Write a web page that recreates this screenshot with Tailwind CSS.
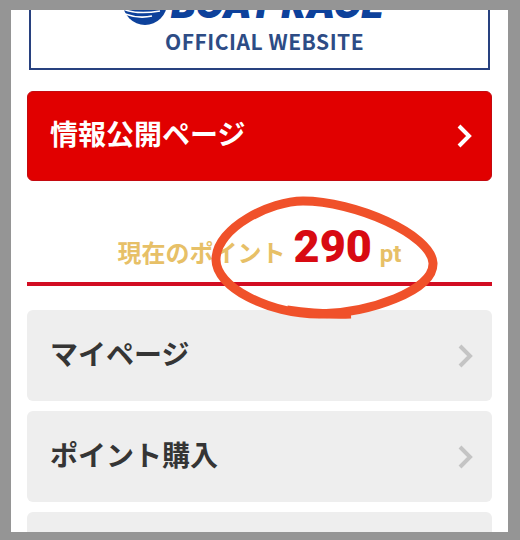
<!DOCTYPE html>
<html lang="ja">
  <head>
    <meta charset="UTF-8" />
    <meta name="viewport" content="width=device-width, initial-scale=1.0" />
    <title>BOAT RACE OFFICIAL WEBSITE</title>
    <!-- Tailwind CSS -->
    <script src="https://cdn.jsdelivr.net/npm/@tailwindcss/browser@4"></script>
  </head>
  <body class="bg-[#959595] font-['Roboto','Noto_Sans_CJK_JP',sans-serif]">
    <div class="h-screen pt-[10px] pb-2 pl-[11px] pr-3">
      <div class="h-full overflow-hidden bg-white px-4">
        <!-- Logo -->
        <header class="mx-[2px] flex h-[60px] flex-col items-center justify-end border-2 border-t-0 border-[#28417f] pb-[11px] [clip-path:inset(0)]">
          <a href="#" class="flex flex-col items-end pr-3 text-[#0d419b]">
            <span class="flex items-end gap-1">
              <svg class="h-11 w-11 shrink-0" viewBox="0 0 44 44">
                <circle cx="22" cy="22" r="22" fill="#0d419b" />
                <path d="M0 28q14 6 37 2M2 33q14 5 27 2M0 23q18 5 42-1" fill="none" stroke="#fff" stroke-width="1.5" />
              </svg>
              <span class="font-['Inter',sans-serif] text-[37px]/10 font-black whitespace-nowrap italic">BOAT RACE</span>
            </span>
            <span class="pr-5 font-['Noto_Sans_CJK_JP',sans-serif] text-[21px]/8 font-bold tracking-wide text-[#2d4c85]">OFFICIAL WEBSITE</span>
          </a>
        </header>

        <main>
          <a href="#" class="mt-[21px] flex h-[90px] items-center justify-between rounded-md border border-[#c40a10] bg-[#e10000] pr-[18px] pl-[22px] text-white">
            <span class="text-[28px] font-bold">情報公開ページ</span>
            <svg class="h-6 w-4" viewBox="0 0 16 24" fill="none" stroke="currentColor" stroke-width="4"><path d="M2 2l10 10L2 22" /></svg>
          </a>

          <!-- Current points -->
          <div class="relative mt-5 flex h-[85px] items-baseline justify-center gap-2 border-b-4 border-[#d20d22] pt-5 text-2xl font-bold text-[#e7c067]">
            <span>現在のポイント</span>
            <strong class="text-[45px]/[52px] text-[#d80a12]">290</strong>
            <span>pt</span>
            <svg class="absolute top-[-6px] left-[182px] h-[125px] w-[230px]" viewBox="0 0 230 125" fill="none" stroke="#f0512a" stroke-width="9">
              <path d="M94 6C62 6 8 32 7 64C6 92 60 119 110 119C160 118 225 96 224 68C222 39 145 6 94 6Z" />
              <path d="M78 115Q110 120 142 119" />
            </svg>
          </div>

          <nav class="mt-6 flex flex-col gap-[10px] text-[28px] font-bold text-[#353535]">
            <a href="#" class="flex h-[91px] items-center justify-between rounded-md bg-[#eee] pr-[18px] pl-[23px]">
              <span>マイページ</span>
              <svg class="h-6 w-4" viewBox="0 0 16 24" fill="none" stroke="#c4c4c4" stroke-width="4"><path d="M2 2l10 10L2 22" /></svg>
            </a>
            <a href="#" class="flex h-[91px] items-center justify-between rounded-md bg-[#eee] pr-[18px] pl-[23px]">
              <span>ポイント購入</span>
              <svg class="h-6 w-4" viewBox="0 0 16 24" fill="none" stroke="#c4c4c4" stroke-width="4"><path d="M2 2l10 10L2 22" /></svg>
            </a>
            <a href="#" class="h-[91px] rounded-md bg-[#eee]"></a>
          </nav>
        </main>
      </div>
    </div>
  </body>
</html>
